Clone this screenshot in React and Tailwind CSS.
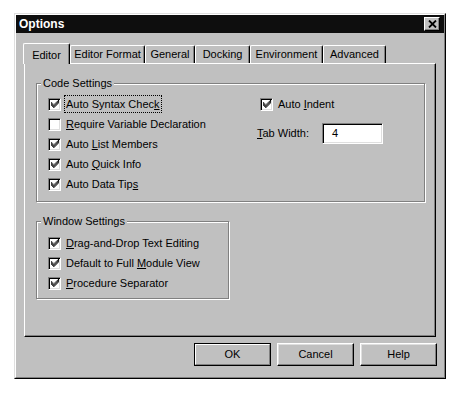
import React from "react";

function CheckMark() {
  const px = [
    [6, 0], [5, 1], [6, 1], [0, 2], [4, 2], [5, 2], [6, 2],
    [0, 3], [1, 3], [3, 3], [4, 3], [5, 3],
    [0, 4], [1, 4], [2, 4], [3, 4], [4, 4],
    [1, 5], [2, 5], [3, 5], [2, 6],
  ];
  return (
    <svg width="8" height="8" viewBox="0 0 7 7">
      {px.map(([x, y]) => (
        <rect key={x + "-" + y} x={x} y={y} width="1" height="1" fill="#000" />
      ))}
    </svg>
  );
}

function Check({ checked, children, focus }) {
  return (
    <div className="flex items-center h-[20px]">
      <div className="w-[13px] h-[13px] bg-white border border-t-[#808080] border-l-[#808080] border-r-white border-b-white shadow-[inset_1px_1px_0_#000,inset_-1px_-1px_0_#dfdfdf] flex items-center justify-center">
        {checked && <CheckMark />}
      </div>
      <span
        className={
          "ml-[5px] leading-[14px] " +
          (focus ? "outline outline-1 outline-dotted outline-black outline-offset-[1px]" : "")
        }
      >
        {children}
      </span>
    </div>
  );
}

function U({ children }) {
  return <span className="underline underline-offset-[1px]">{children}</span>;
}

function Tab({ label, selected, w }) {
  if (selected) {
    return (
      <div
        className={
          "relative z-10 -ml-[1px] -mb-[1px] h-[21px] bg-[#c0c0c0] border-t border-l border-white border-r border-r-black rounded-t-[2px] shadow-[inset_-1px_0_0_#808080] flex items-start justify-center pt-[3px] " +
          w
        }
      >
        {label}
      </div>
    );
  }
  return (
    <div
      className={
        "h-[18px] bg-[#c0c0c0] border-t border-l border-white border-r border-r-black rounded-t-[2px] shadow-[inset_-1px_0_0_#808080] flex items-center justify-center " +
        w
      }
    >
      {label}
    </div>
  );
}

function Button({ children, def }) {
  if (def) {
    return (
      <div className="w-[77px] h-[23px] border border-black">
        <div className="w-full h-full border border-t-white border-l-white border-r-[#808080] border-b-[#808080] flex items-center justify-center">
          {children}
        </div>
      </div>
    );
  }
  return (
    <div className="w-[77px] h-[23px] border border-t-white border-l-white border-r-black border-b-black shadow-[inset_-1px_-1px_0_#808080,inset_1px_1px_0_#dfdfdf] flex items-center justify-center">
      {children}
    </div>
  );
}

export default function App() {
  return (
    <div className="min-h-[395px] bg-white pt-[13px] pl-[14px] font-['Liberation_Sans',Arial,sans-serif] text-[11px] text-black">
      <div className="w-[432px] h-[366px] border border-t-[#dfdfdf] border-l-[#dfdfdf] border-r-black border-b-black">
        <div className="w-full h-full border border-t-white border-l-white border-r-[#808080] border-b-[#808080] bg-[#c0c0c0] flex flex-col">
          {/* Title bar */}
          <div className="h-[18px] bg-[#0e0e0e] flex items-center justify-between pl-[3px] pr-[4px]">
            <span className="text-white font-bold text-[12px] leading-none">Options</span>
            <div className="w-[16px] h-[14px] bg-[#c0c0c0] border border-t-white border-l-white border-r-black border-b-black shadow-[inset_-1px_-1px_0_#808080] flex items-center justify-center">
              <svg width="9" height="8" viewBox="0 0 9 8">
                <path d="M1 0.5 L8 7.5 M8 0.5 L1 7.5" stroke="#000" strokeWidth="1.8" />
              </svg>
            </div>
          </div>

          {/* Tabs */}
          <div className="px-[8px] pt-[10px]">
            <div className="flex items-end h-[20px]">
              <Tab label="Editor" selected w="w-[47px]" />
              <Tab label="Editor Format" w="w-[75px]" />
              <Tab label="General" w="w-[50px]" />
              <Tab label="Docking" w="w-[55px]" />
              <Tab label="Environment" w="w-[73px]" />
              <Tab label="Advanced" w="w-[63px]" />
            </div>

            {/* Panel */}
            <div className="h-[274px] border border-t-white border-l-white border-r-black border-b-black shadow-[inset_-1px_-1px_0_#808080] pt-[12px]">
              <fieldset className="ml-[11px] mr-[10px] border border-[#808080] shadow-[inset_1px_1px_0_#fff,1px_1px_0_#fff] pl-[4px] pt-[4px] pb-[7px]">
                <legend className="px-[2px] leading-[14px] bg-[#c0c0c0]">Code Settings</legend>
                <div className="flex pl-[7px]">
                  <div className="w-[212px]">
                    <Check checked focus>
                      Auto Syntax Chec<U>k</U>
                    </Check>
                    <Check>
                      <U>R</U>equire Variable Declaration
                    </Check>
                    <Check checked>
                      Auto <U>L</U>ist Members
                    </Check>
                    <Check checked>
                      Auto <U>Q</U>uick Info
                    </Check>
                    <Check checked>
                      Auto Data Tip<U>s</U>
                    </Check>
                  </div>
                  <div>
                    <Check checked>
                      Auto <U>I</U>ndent
                    </Check>
                    <div className="flex items-center mt-[9px] -ml-[3px]">
                      <span className="w-[65px]">
                        <U>T</U>ab Width:
                      </span>
                      <div className="w-[61px] h-[21px] bg-white border border-t-[#808080] border-l-[#808080] border-r-white border-b-white shadow-[inset_1px_1px_0_#000,inset_-1px_-1px_0_#dfdfdf] flex items-center pl-[9px]">
                        4
                      </div>
                    </div>
                  </div>
                </div>
              </fieldset>

              <fieldset className="ml-[11px] w-[193px] mt-[12px] border border-[#808080] shadow-[inset_1px_1px_0_#fff,1px_1px_0_#fff] pl-[4px] pt-[5px] pb-[5px]">
                <legend className="px-[2px] leading-[14px] bg-[#c0c0c0]">Window Settings</legend>
                <div className="pl-[7px]">
                  <Check checked>
                    <U>D</U>rag-and-Drop Text Editing
                  </Check>
                  <Check checked>
                    Default to Full <U>M</U>odule View
                  </Check>
                  <Check checked>
                    <U>P</U>rocedure Separator
                  </Check>
                </div>
              </fieldset>
            </div>
          </div>

          {/* Buttons */}
          <div className="flex justify-end gap-[6px] pr-[7px] mt-[6px]">
            <Button def>OK</Button>
            <Button>Cancel</Button>
            <Button>Help</Button>
          </div>
        </div>
      </div>
    </div>
  );
}
